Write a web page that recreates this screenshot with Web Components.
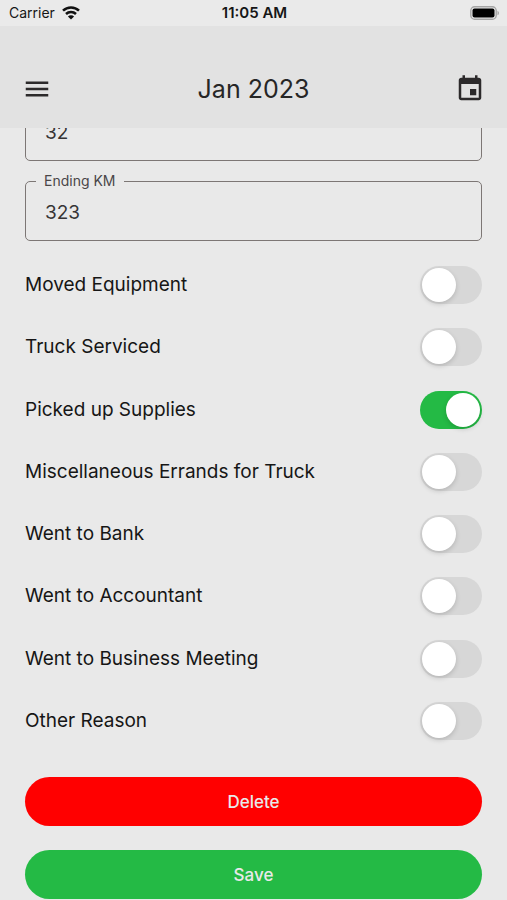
<!DOCTYPE html>
<html lang="en">
<head>
<meta charset="utf-8">
<meta name="viewport" content="width=device-width, initial-scale=1">
<title>Jan 2023</title>
<style>
  body {
    margin: 0;
    background: #e9e9e9;
    font-family: Inter, "Liberation Sans", sans-serif;
    color: #161616;
  }
</style>
</head>
<body>
<log-screen>
  <status-bar slot="top" carrier="Carrier" time="11:05 AM"></status-bar>
  <month-header slot="top">Jan 2023</month-header>
  <outlined-field name="Starting KM" value="32"></outlined-field>
  <outlined-field label="Ending KM" value="323"></outlined-field>
  <switch-list>
    <switch-row>Moved Equipment</switch-row>
    <switch-row>Truck Serviced</switch-row>
    <switch-row checked>Picked up Supplies</switch-row>
    <switch-row>Miscellaneous Errands for Truck</switch-row>
    <switch-row>Went to Bank</switch-row>
    <switch-row>Went to Accountant</switch-row>
    <switch-row>Went to Business Meeting</switch-row>
    <switch-row>Other Reason</switch-row>
  </switch-list>
  <pill-button style="--pill: #ff0000">Delete</pill-button>
  <pill-button style="--pill: #24ba45">Save</pill-button>
</log-screen>

<script>
class BaseElement extends HTMLElement {
  constructor() {
    super()
    const template = document.createElement("template")
    template.innerHTML = this.constructor.markup
    this.attachShadow({ mode: "open" }).append(template.content.cloneNode(true))
  }

  find(selector) {
    return this.shadowRoot.querySelector(selector)
  }
}

class StatusBar extends BaseElement {
  static markup = `
    <style>
      :host {
        display: grid;
        grid-template-columns: 1fr auto 1fr;
        align-items: center;
        height: 26px;
        padding: 0 7px 0 9px;
        background: #eaeaea;
        font-size: 14px;
        line-height: 26px;
      }
      .carrier { display: flex; align-items: center; gap: 7px; }
      .time { font-size: 15px; font-weight: 600; }
      .battery { justify-self: end; }
      svg { display: block; }
    </style>
    <span class="carrier">
      <span id="carrier"></span>
      <svg width="18" height="14" viewBox="0 0 18 14" fill="none" stroke="#111" stroke-width="2.5">
        <path d="M1 4.7a11.5 11.5 0 0 1 16 0M4 8a7.2 7.2 0 0 1 10 0"/>
        <path d="M9 13.6 5.9 10.5a4.4 4.4 0 0 1 6.2 0z" fill="#111" stroke="none"/>
      </svg>
    </span>
    <span class="time"></span>
    <svg class="battery" width="30" height="14" viewBox="0 0 30 14">
      <rect x=".8" y=".8" width="25.4" height="12.4" rx="3.8" fill="none" stroke="#a5a5a5" stroke-width="1.4"/>
      <rect x="2.5" y="2.5" width="22" height="9" rx="2" fill="#000"/>
      <path d="M27.5 4.7a2.5 2.5 0 0 1 0 4.6z" fill="#a5a5a5"/>
    </svg>
  `

  connectedCallback() {
    this.find("#carrier").textContent = this.getAttribute("carrier")
    this.find(".time").textContent = this.getAttribute("time")
  }
}

class MonthHeader extends BaseElement {
  static markup = `
    <style>
      :host {
        display: flex;
        align-items: center;
        justify-content: space-between;
        height: 78px;
        padding: 24px 22px 0;
        background: #e2e2e2;
        color: #262626;
      }
      h1 {
        margin: 0;
        font-size: 25px;
        font-weight: 400;
        line-height: 32px;
      }
      button {
        padding: 0;
        border: 0;
        background: none;
        color: #2c2a2b;
      }
      svg { display: block; fill: currentColor; }
    </style>
    <button type="button" aria-label="Menu">
      <svg width="30" height="30" viewBox="0 0 24 24"><path d="M3 18h18v-2H3v2zm0-5h18v-2H3v2zm0-7v2h18V6H3z"/></svg>
    </button>
    <h1><slot></slot></h1>
    <button type="button" aria-label="Pick a date">
      <svg width="30" height="30" viewBox="0 0 24 24"><path d="M17 12h-5v5h5v-5zM16 1v2H8V1H6v2H5c-1.11 0-2 .9-2 2v14c0 1.1.89 2 2 2h14c1.1 0 2-.9 2-2V5c0-1.1-.9-2-2-2h-1V1h-2zm3 18H5V8h14v11z"/></svg>
    </button>
  `
}

class OutlinedField extends BaseElement {
  static markup = `
    <style>
      :host { display: block; }
      fieldset {
        min-width: 0;
        margin: 0;
        padding: 0 0 3px;
        border: 1px solid #7d7775;
        border-radius: 5px;
      }
      legend {
        margin-left: 10px;
        padding: 0 8px;
        color: #4a4648;
        font-size: 14px;
        line-height: 14px;
      }
      label { display: block; }
      input {
        display: block;
        box-sizing: border-box;
        width: 100%;
        height: 49px;
        padding: 0 19px;
        border: 0;
        outline: 0;
        background: none;
        color: #363435;
        font: inherit;
        font-size: 19px;
      }
    </style>
    <fieldset>
      <legend><label for="input"></label></legend>
      <input id="input" type="text" inputmode="numeric">
    </fieldset>
  `

  connectedCallback() {
    const input = this.find("input")
    input.value = this.getAttribute("value") ?? ""
    if (this.hasAttribute("label")) {
      this.find("label").textContent = this.getAttribute("label")
    } else {
      this.find("legend").remove()
      input.setAttribute("aria-label", this.getAttribute("name"))
    }
  }
}

class SwitchList extends BaseElement {
  static markup = `
    <style>
      :host {
        display: grid;
        grid-auto-rows: 1fr;
        min-height: 498px;
        margin: 13px 0 25px;
      }
    </style>
    <slot></slot>
  `
}

class SwitchRow extends BaseElement {
  static markup = `
    <style>
      :host { display: grid; }
      label {
        display: flex;
        align-items: center;
        justify-content: space-between;
        gap: 16px;
        font-size: 19px;
        line-height: 24px;
      }
      input {
        appearance: none;
        display: flex;
        flex: none;
        box-sizing: border-box;
        width: 62px;
        height: 38px;
        margin: 0;
        padding: 2px;
        border-radius: 19px;
        background: #d7d7d7;
      }
      input::before {
        content: "";
        width: 34px;
        height: 34px;
        border-radius: 50%;
        background: #fff;
        box-shadow: 0 2px 5px rgba(0, 0, 0, 0.16);
      }
      input:checked {
        justify-content: flex-end;
        background: #24ba45;
      }
    </style>
    <label><slot></slot><input type="checkbox" role="switch"></label>
  `

  connectedCallback() {
    this.find("input").checked = this.hasAttribute("checked")
  }
}

class PillButton extends BaseElement {
  static markup = `
    <style>
      :host { display: block; }
      button {
        display: block;
        width: 100%;
        height: 49px;
        padding: 0;
        border: 0;
        border-radius: 25px;
        background: var(--pill);
        color: #e9e9e9;
        font: inherit;
        font-size: 17px;
        font-weight: 500;
      }
    </style>
    <button type="button"><slot></slot></button>
  `
}

class LogScreen extends BaseElement {
  static markup = `
    <style>
      :host {
        display: flex;
        flex-direction: column;
        height: 100vh;
      }
      main {
        flex: 1;
        min-height: 0;
        overflow-y: auto;
        scrollbar-width: none;
      }
      form { padding: 20px 25px 1px; }
      ::slotted(outlined-field[label]) { margin-top: 13px; }
      ::slotted(pill-button:last-child) { margin-top: 24px; }
    </style>
    <slot name="top"></slot>
    <main><form><slot></slot></form></main>
  `

  // the form opens at its end, where the actions are
  connectedCallback() {
    const main = this.find("main")
    main.scrollTop = main.scrollHeight
  }
}

customElements.define("status-bar", StatusBar)
customElements.define("month-header", MonthHeader)
customElements.define("outlined-field", OutlinedField)
customElements.define("switch-list", SwitchList)
customElements.define("switch-row", SwitchRow)
customElements.define("pill-button", PillButton)
customElements.define("log-screen", LogScreen)
</script>
</body>
</html>
